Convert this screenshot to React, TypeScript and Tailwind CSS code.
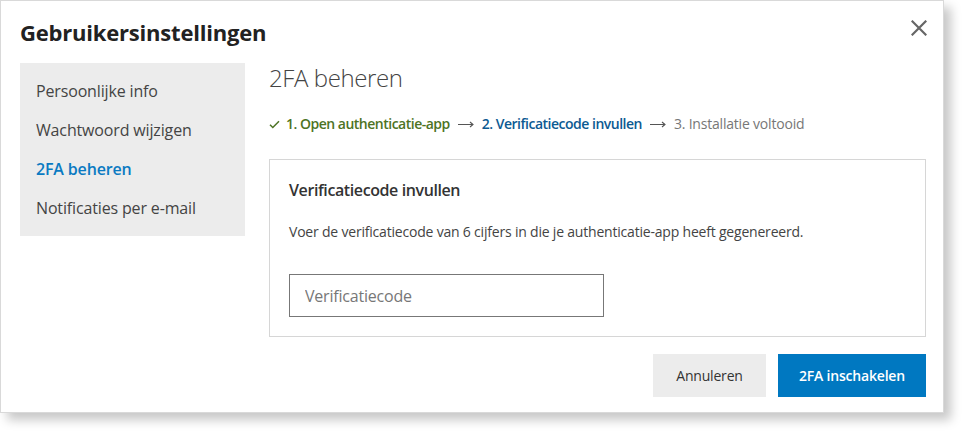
import React from "react";

const menu = [
  { label: "Persoonlijke info", active: false },
  { label: "Wachtwoord wijzigen", active: false },
  { label: "2FA beheren", active: true },
  { label: "Notificaties per e-mail", active: false },
];

const CloseIcon = () => (
  <svg width="16" height="16" viewBox="0 0 16 16" className="block">
    <path d="M1.5 1.5L14.5 14.5M14.5 1.5L1.5 14.5" stroke="#666" strokeWidth="2.2" strokeLinecap="square" />
  </svg>
);

const Check = () => (
  <svg width="11" height="9" viewBox="0 0 11 9" className="block">
    <path d="M1 4.8L3.8 7.5L10 1.2" fill="none" stroke="#4d7324" strokeWidth="1.5" />
  </svg>
);

const Arrow = () => (
  <svg width="16" height="8" viewBox="0 0 16 8" className="mx-2 block shrink-0">
    <path d="M0 4.5H15M12 2L15 4.5L12 7" fill="none" stroke="#555" strokeWidth="1.1" />
  </svg>
);

export default function App() {
  return (
    <div
      className="w-[967px] h-[436px] bg-white text-[#333]"
      style={{ fontFamily: '"Open Sans", "Noto Sans", sans-serif' }}
    >
      <div className="w-[944px] h-[413px] border border-[#d9d9d9] bg-white shadow-[7px_7px_10px_rgba(0,0,0,0.22)] flex flex-col pl-[19px] pr-[17px]">
        <div className="flex items-start justify-between pt-[16px] h-[62px]">
          <h1 className="text-[22px] leading-[30px] font-bold tracking-[-0.2px] text-[#222]">
            Gebruikersinstellingen
          </h1>
          <button className="mt-[3px] mr-[-1px] p-0">
            <CloseIcon />
          </button>
        </div>

        <div className="flex gap-6">
          <nav className="w-[225px] shrink-0 bg-[#ececec] py-[8px] h-[173px]">
            <ul>
              {menu.map((item) => (
                <li
                  key={item.label}
                  className={
                    item.active
                      ? "h-[39px] flex items-center px-4 text-[16px] tracking-[-0.15px] font-semibold text-[#0a7ac2]"
                      : "h-[39px] flex items-center px-4 text-[16px] tracking-[-0.15px] text-[#444]"
                  }
                >
                  {item.label}
                </li>
              ))}
            </ul>
          </nav>

          <div className="flex-1 flex flex-col">
            <h2 className="text-[24px] leading-[30px] font-light tracking-[-0.4px] text-[#444]">2FA beheren</h2>

            <div className="mt-[21px] flex items-center text-[14px] leading-[20px]">
              <span className="mr-[6px]">
                <Check />
              </span>
              <span className="font-semibold tracking-[-0.5px] text-[#4d7324]">1. Open authenticatie-app</span>
              <Arrow />
              <span className="font-semibold tracking-[-0.5px] text-[#0c5a92]">2. Verificatiecode invullen</span>
              <Arrow />
              <span className="tracking-[-0.2px] text-[#777]">3. Installatie voltooid</span>
            </div>

            <div className="mt-[25px] border border-[#d6d6d6] px-[19px] pt-[18px] pb-[19px]">
              <h3 className="text-[16px] leading-[24px] font-semibold tracking-[-0.4px] text-[#333]">
                Verificatiecode invullen
              </h3>
              <p className="mt-[20px] text-[14px] leading-[20px] tracking-[-0.2px] text-[#444]">
                Voer de verificatiecode van 6 cijfers in die je authenticatie-app heeft gegenereerd.
              </p>
              <input
                type="text"
                placeholder="Verificatiecode"
                className="mt-[32px] block w-[315px] h-[43px] border border-[#777] px-[15px] text-[16px] tracking-[-0.2px] text-[#333] placeholder:text-[#777] outline-none"
              />
            </div>

            <div className="mt-[17px] flex justify-end gap-3">
              <button className="w-[113px] h-[43px] bg-[#ececec] text-[14px] font-medium tracking-[-0.2px] text-[#333]">
                Annuleren
              </button>
              <button className="w-[148px] h-[43px] bg-[#0078c1] text-[14px] font-semibold tracking-[-0.2px] text-white">
                2FA inschakelen
              </button>
            </div>
          </div>
        </div>
      </div>
    </div>
  );
}
